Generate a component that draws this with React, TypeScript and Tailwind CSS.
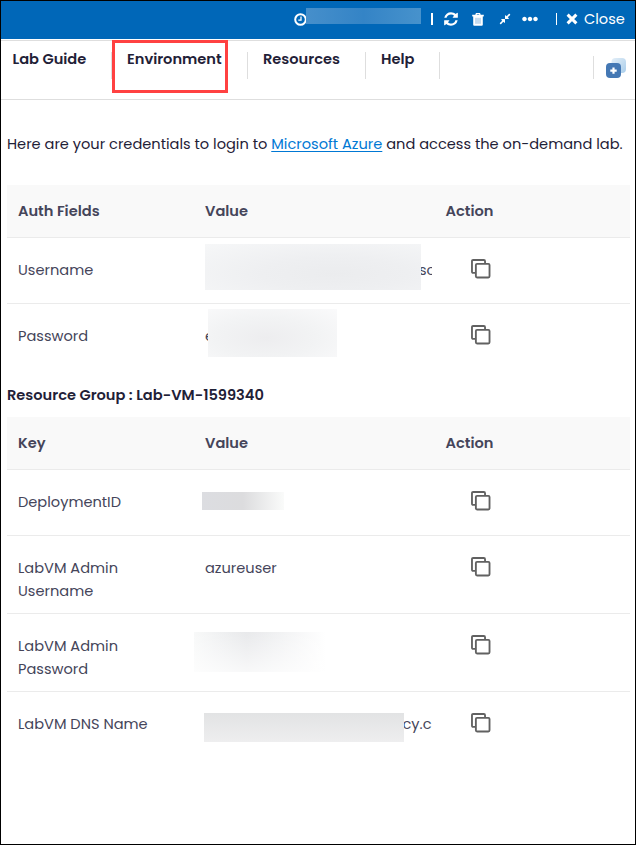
import type { ReactNode } from 'react';
import { FaCompressAlt, FaEllipsisH } from 'react-icons/fa';

function ClockIcon() {
  return (
    <svg className="size-[13px] shrink-0" viewBox="0 0 13 13" fill="none" stroke="white">
      <circle cx="6.5" cy="6.5" r="5.3" strokeWidth="2" />
      <path d="M7 3.5v3.6H4.3" strokeWidth="1.3" />
    </svg>
  );
}

function RefreshIcon() {
  return (
    <svg className="h-[16px] w-[14px] shrink-0" viewBox="0 0 1536 1792" fill="white">
      <path d="M1511 1056q0 5-1 7-64 268-268 434.5t-478 166.5q-146 0-282.5-55t-243.5-157l-129 129q-19 19-45 19t-45-19-19-45v-448q0-26 19-45t45-19h448q26 0 45 19t19 45-19 45l-137 137q71 66 161 102t187 36q134 0 250-65t186-179q11-17 53-117 8-23 30-23h192q13 0 22.5 9.5t9.5 22.5zm25-800v448q0 26-19 45t-45 19h-448q-26 0-45-19t-19-45 19-45l138-138q-148-137-349-137-134 0-250 65t-186 179q-11 17-53 117-8 23-30 23h-199q-13 0-22.5-9.5t-9.5-22.5v-7q65-268 270-434.5t480-166.5q146 0 284 55.5t245 156.5l130-129q19-19 45-19t45 19 19 45z" />
    </svg>
  );
}

function TrashIcon() {
  return (
    <svg className="h-[13px] w-[12px] shrink-0" viewBox="0 0 12 13" fill="none" stroke="white">
      <path d="M0.2 2.6h11.6" strokeWidth="1.7" />
      <path d="M3.8 2.5l.6-1.8h3.2l.6 1.8" strokeWidth="1.3" />
      <path d="M1.2 3h9.6v8.7q0 1.1-1.1 1.1H2.3q-1.1 0-1.1-1.1z" fill="white" stroke="none" />
      <path d="M4 4.8v6M6 4.8v6M8 4.8v6" stroke="#7fb0dc" strokeWidth="0.9" />
    </svg>
  );
}

function CrossIcon() {
  return (
    <svg className="size-[12px] shrink-0" viewBox="0 0 12 12" stroke="white" strokeWidth="3">
      <path d="M1.6 1.6l8.8 8.8M10.4 1.6l-8.8 8.8" />
    </svg>
  );
}

function CopyIcon() {
  return (
    <svg className="size-[19.5px]" viewBox="0 0 20 20" fill="none" stroke="#616161" strokeWidth="1.9">
      <path d="M4.5 14.3H2.2q-1.2 0-1.2-1.2V2.2Q1 1 2.2 1h11q1.2 0 1.2 1.2v2.2" />
      <rect x="5" y="5" width="14" height="14" rx="1.2" />
    </svg>
  );
}

function PlusBadge() {
  return (
    <svg className="h-[20px] w-[20px]" viewBox="0 0 20 20">
      <defs>
        <linearGradient id="tile" x1="0" y1="0" x2="1" y2="1">
          <stop offset="0" stopColor="#e4eff8" />
          <stop offset="1" stopColor="#a9cdea" />
        </linearGradient>
      </defs>
      <rect x="5.5" y="0" width="14.5" height="15" rx="4" fill="url(#tile)" />
      <rect x="0" y="5" width="15" height="15" rx="4" fill="#4478b4" />
      <path d="M7.5 9.4v6.4M4.3 12.6h6.4" stroke="white" strokeWidth="2.2" />
    </svg>
  );
}

function Row({ label, children, tall = false, last = false }: { label: ReactNode; children?: ReactNode; tall?: boolean; last?: boolean }) {
  return (
    <div className={`grid grid-cols-[187px_240px_1fr] pl-[11px] ${tall ? 'h-[78px]' : 'h-[66px]'} ${last ? '' : 'border-b border-[#ebebeb]'}`}>
      <div className="pt-[21px]">{label}</div>
      <div className="relative w-[227px] overflow-visible pt-[21px]">{children}</div>
      <div className="pt-[21px] pl-[26px]"><CopyIcon /></div>
    </div>
  );
}

function TableHead({ first }: { first: string }) {
  return (
    <div className="grid h-[53px] grid-cols-[187px_240px_1fr] items-center border-b border-[#ebebeb] bg-[#f9f9f9] pl-[11px] font-semibold text-[#45455a]">
      <span>{first}</span>
      <span>Value</span>
      <span className="pl-[0.5px]">Action</span>
    </div>
  );
}

export default function App() {
  return (
    <div className="flex h-[845px] w-[636px] flex-col overflow-hidden border border-black bg-white font-[Poppins,Inter,sans-serif] text-[14.6px] leading-[23px] text-[#45455a]">
      <header className="flex h-[38px] shrink-0 items-center bg-[#0067b8] pb-[2px] pl-[293px] text-white">
        <ClockIcon />
        <div className="mb-[7px] -ml-px h-[16px] w-[115px] bg-linear-to-r from-[#468fcb] via-[#3484c6] to-[#4792cc]" />
        <span className="ml-[10px] h-[12px] w-[1.5px] bg-white" />
        <div className="ml-[11px]"><RefreshIcon /></div>
        <div className="ml-[14.5px]"><TrashIcon /></div>
        <FaCompressAlt className="ml-[14.5px] size-[12px]" />
        <FaEllipsisH className="ml-[11px] size-[16px]" />
        <span className="ml-[18px] h-[12px] w-[1.5px] bg-white" />
        <div className="ml-[9px]"><CrossIcon /></div>
        <span className="ml-[6px]">Close</span>
      </header>

      <nav className="relative mt-px flex h-[60px] shrink-0 items-start border-t border-b border-[#dedede] pt-[7px] pl-[11px] font-semibold text-[#1f2137]">
        <span className="w-[99px] pl-[0.5px]">Lab Guide</span>
        <span className="mt-[4px] h-[27px] w-px bg-[#dedede]" />
        <span className="ml-[15px] w-[120px]">Environment</span>
        <span className="mt-[4px] h-[27px] w-px bg-[#dedede]" />
        <span className="ml-[15px] w-[102px]">Resources</span>
        <span className="mt-[4px] h-[27px] w-px bg-[#dedede]" />
        <span className="ml-[15px] w-[58px]">Help</span>
        <span className="mt-[4px] h-[27px] w-px bg-[#dedede]" />
        <span className="mt-[8px] ml-[153px] h-[23px] w-px bg-[#dedede]" />
        <div className="mt-[10px] ml-[12px]"><PlusBadge /></div>
        <div className="absolute top-[-1px] left-[111px] h-[53px] w-[116px] border-[3px] border-[#ff4141]" />
      </nav>

      <main className="flex flex-col pt-[33px] pr-[5px] pl-[6px]">
        <p className="whitespace-nowrap text-[#1f2137]">
          Here are your credentials to login to <a className="text-[#0078d4] underline underline-offset-2">Microsoft Azure</a> and access the on-demand lab.
        </p>

        <section className="mt-[29px]">
          <TableHead first="Auth Fields" />
          <Row label="Username">
            <div className="pl-[214px]">
              <div className="w-[13px] overflow-hidden">sc</div>
            </div>
            <div className="absolute top-[6px] left-0 h-[46px] w-[216px] bg-[radial-gradient(ellipse_at_60%_65%,#ebecee,#eeeff1_40%,#f6f7f8)]" />
          </Row>
          <Row label="Password" last>
            <span>e</span>
            <div className="absolute top-[5px] left-[3px] h-[48px] w-[129px] bg-[radial-gradient(ellipse_at_45%_60%,#ededef,#f2f3f4_50%,#fafafb)]" />
          </Row>
        </section>

        <h2 className="mt-[14px] font-semibold whitespace-nowrap text-[#1f2137]">Resource Group : Lab-VM-1599340</h2>

        <section className="mt-[10px]">
          <TableHead first="Key" />
          <Row label="DeploymentID">
            <div className="absolute top-[22px] left-[-3px] h-[18px] w-[82px] bg-linear-to-r from-[#dcdde1] via-[#dcdcde] to-[#fafbfa]" />
          </Row>
          <Row label={<>LabVM Admin<br />Username</>} tall>azureuser</Row>
          <Row label={<>LabVM Admin<br />Password</>} tall>
            <div className="absolute top-[18px] left-[-11px] h-[40px] w-[132px] bg-linear-to-r from-[#f8f9f9] via-[#e8e9eb] via-40% to-white" />
            <div className="absolute top-[18px] left-[-11px] h-[40px] w-[132px] bg-linear-to-b from-transparent to-white/70" />
          </Row>
          <Row label="LabVM DNS Name" last>
            <div className="pl-[197.5px]">cy.c</div>
            <div className="absolute top-[21px] left-[-1px] h-[29px] w-[200px] bg-linear-to-b from-[#e2e3e4] to-[#eeeeef]" />
          </Row>
        </section>
      </main>
    </div>
  );
}
